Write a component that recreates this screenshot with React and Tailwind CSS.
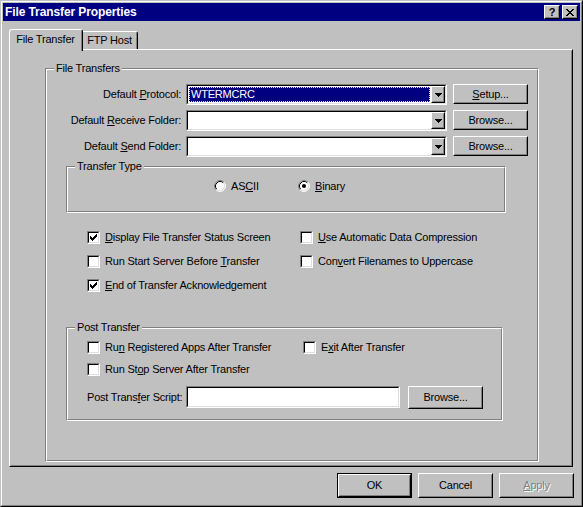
import React from "react";

function Raised({ className = "", innerClassName = "", children }) {
  return (
    <div className={"border border-t-white border-l-white border-r-black border-b-black bg-[#c0c0c0] " + className}>
      <div className={"h-full w-full border border-t-[#c0c0c0] border-l-[#c0c0c0] border-r-[#808080] border-b-[#808080] " + innerClassName}>
        {children}
      </div>
    </div>
  );
}

function Sunken({ className = "", innerClassName = "", children }) {
  return (
    <div className={"border border-t-[#808080] border-l-[#808080] border-r-white border-b-white " + className}>
      <div className={"h-full w-full border border-t-black border-l-black border-r-[#dfdfdf] border-b-[#dfdfdf] bg-white " + innerClassName}>
        {children}
      </div>
    </div>
  );
}

function Button({ children, def, disabled, className = "w-[75px] h-[25px]" }) {
  const content = (
    <Raised className="h-full w-full" innerClassName="flex items-center justify-center">
      <span className={disabled ? "text-[#808080] [text-shadow:1px_1px_0_#ffffff]" : ""}>{children}</span>
    </Raised>
  );
  if (def) {
    return <div className={"border border-black " + className}>{content}</div>;
  }
  return <div className={className}>{content}</div>;
}

function Arrow() {
  return (
    <svg width="7" height="4" viewBox="0 0 7 4" shapeRendering="crispEdges">
      <rect x="0" y="0" width="7" height="1" fill="#000" />
      <rect x="1" y="1" width="5" height="1" fill="#000" />
      <rect x="2" y="2" width="3" height="1" fill="#000" />
      <rect x="3" y="3" width="1" height="1" fill="#000" />
    </svg>
  );
}

function Combo({ value, className = "w-[261px] h-[21px]" }) {
  return (
    <Sunken className={className} innerClassName="flex">
      <div className="flex-1 p-px">
        {value ? (
          <div className="h-full bg-[#000080] text-white border border-dotted border-[#ffff00] flex items-center pl-[1px] leading-none">
            {value}
          </div>
        ) : null}
      </div>
      <Raised className="w-[14px] h-full" innerClassName="flex items-center justify-center">
        <Arrow />
      </Raised>
    </Sunken>
  );
}

function CheckBox({ checked }) {
  return (
    <div className="w-[13px] h-[13px] shrink-0 border border-t-[#808080] border-l-[#808080] border-r-white border-b-white">
      <div className="w-full h-full border border-t-black border-l-black border-r-[#dfdfdf] border-b-[#dfdfdf] bg-white flex items-center justify-center">
        {checked ? (
          <svg width="7" height="7" viewBox="0 0 7 7" shapeRendering="crispEdges">
            <rect x="0" y="2" width="1" height="3" fill="#000" />
            <rect x="1" y="3" width="1" height="3" fill="#000" />
            <rect x="2" y="4" width="1" height="3" fill="#000" />
            <rect x="3" y="3" width="1" height="3" fill="#000" />
            <rect x="4" y="2" width="1" height="3" fill="#000" />
            <rect x="5" y="1" width="1" height="3" fill="#000" />
            <rect x="6" y="0" width="1" height="3" fill="#000" />
          </svg>
        ) : null}
      </div>
    </div>
  );
}

function Check({ checked, children }) {
  return (
    <div className="flex items-center h-[13px]">
      <CheckBox checked={checked} />
      <span className="ml-[5px] whitespace-nowrap">{children}</span>
    </div>
  );
}

function Radio({ checked }) {
  return (
    <svg width="12" height="12" viewBox="0 0 12 12" className="shrink-0">
      <circle cx="6" cy="6" r="5" fill="#fff" />
      <path d="M2.11 9.89 A5.5 5.5 0 0 1 9.89 2.11" fill="none" stroke="#808080" strokeWidth="1" />
      <path d="M9.89 2.11 A5.5 5.5 0 0 1 2.11 9.89" fill="none" stroke="#ffffff" strokeWidth="1" />
      <path d="M2.82 9.18 A4.5 4.5 0 0 1 9.18 2.82" fill="none" stroke="#000000" strokeWidth="1" />
      <path d="M9.18 2.82 A4.5 4.5 0 0 1 2.82 9.18" fill="none" stroke="#dfdfdf" strokeWidth="1" />
      {checked ? <circle cx="6" cy="6" r="2" fill="#000" /> : null}
    </svg>
  );
}

function Group({ label, className, innerClassName = "", children }) {
  return (
    <div className={"relative border border-t-[#808080] border-l-[#808080] border-r-white border-b-white " + className}>
      <div className={"h-full w-full border border-t-white border-l-white border-r-[#808080] border-b-[#808080] " + innerClassName}>
        {children}
      </div>
      <div className="absolute left-[8px] top-[-8px] px-[2px] bg-[#c0c0c0] leading-[14px] whitespace-nowrap">
        {label}
      </div>
    </div>
  );
}

function U({ children }) {
  return <span className="underline underline-offset-[1px]">{children}</span>;
}

export default function App() {
  return (
    <div className="w-[583px] h-[507px] bg-[#c0c0c0] border border-t-[#c0c0c0] border-l-[#c0c0c0] border-r-black border-b-black font-['Liberation_Sans',Arial,sans-serif] text-[11px] tracking-[-0.2px] text-black overflow-hidden">
      <div className="h-full w-full border border-t-white border-l-white border-r-[#808080] border-b-[#808080] p-px flex flex-col">
        {/* Title bar */}
        <div className="h-[18px] bg-[#000080] flex items-center pl-[2px] pr-[2px] shrink-0">
          <span className="text-white font-bold text-[12px] tracking-[-0.1px]">File Transfer Properties</span>
          <div className="ml-auto flex gap-[2px]">
            <Raised className="w-[16px] h-[14px]" innerClassName="flex items-center justify-center">
              <span className="font-bold text-[11px] leading-none tracking-normal">?</span>
            </Raised>
            <Raised className="w-[16px] h-[14px]" innerClassName="flex items-center justify-center">
              <svg width="8" height="7" viewBox="0 0 8 7" shapeRendering="crispEdges">
                <rect x="0" y="0" width="2" height="1" fill="#000" />
                <rect x="6" y="0" width="2" height="1" fill="#000" />
                <rect x="1" y="1" width="2" height="1" fill="#000" />
                <rect x="5" y="1" width="2" height="1" fill="#000" />
                <rect x="2" y="2" width="4" height="1" fill="#000" />
                <rect x="3" y="3" width="2" height="1" fill="#000" />
                <rect x="2" y="4" width="4" height="1" fill="#000" />
                <rect x="1" y="5" width="2" height="1" fill="#000" />
                <rect x="5" y="5" width="2" height="1" fill="#000" />
                <rect x="0" y="6" width="2" height="1" fill="#000" />
                <rect x="6" y="6" width="2" height="1" fill="#000" />
              </svg>
            </Raised>
          </div>
        </div>

        {/* Tabs */}
        <div className="h-[28px] flex items-end pl-[6px] shrink-0">
          <div className="relative z-10 w-[74px] h-[22px] -mb-[2px] bg-[#c0c0c0] border-l border-t border-r border-l-white border-t-white border-r-black rounded-t-[3px]">
            <div className="h-full border-r border-r-[#808080] flex items-center justify-center pb-[3px]">
              File Transfer
            </div>
          </div>
          <div className="w-[55px] h-[18px] bg-[#c0c0c0] border-t border-r border-t-white border-r-black rounded-tr-[3px]">
            <div className="h-full border-r border-r-[#808080] flex items-center justify-center pb-[1px]">
              FTP Host
            </div>
          </div>
        </div>

        {/* Panel */}
        <div className="ml-[6px] w-[564px] h-[418px] shrink-0 border border-t-white border-l-white border-r-black border-b-black">
          <div className="h-full w-full border border-t-[#c0c0c0] border-l-[#c0c0c0] border-r-[#808080] border-b-[#808080] pl-[34px] pt-[17px]">
            <Group label="File Transfers" className="w-[494px] h-[394px]" innerClassName="flex flex-col pt-[14px]">
              {/* field rows */}
              <div className="flex flex-col gap-[5px]">
                <div className="flex items-start">
                  <div className="w-[139px] pr-[5px] text-right leading-[21px] whitespace-nowrap">
                    Default <U>P</U>rotocol:
                  </div>
                  <Combo value="WTERMCRC" />
                  <Button className="ml-[6px] w-[75px] h-[20px]">
                    <U>S</U>etup...
                  </Button>
                </div>
                <div className="flex items-start">
                  <div className="w-[139px] pr-[5px] text-right leading-[21px] whitespace-nowrap">
                    Default <U>R</U>eceive Folder:
                  </div>
                  <Combo />
                  <Button className="ml-[6px] w-[75px] h-[20px]">Browse...</Button>
                </div>
                <div className="flex items-start">
                  <div className="w-[139px] pr-[5px] text-right leading-[21px] whitespace-nowrap">
                    Default <U>S</U>end Folder:
                  </div>
                  <Combo />
                  <Button className="ml-[6px] w-[75px] h-[20px]">Browse...</Button>
                </div>
              </div>

              {/* Transfer type */}
              <Group label="Transfer Type" className="mt-[9px] ml-[19px] w-[440px] h-[47px] shrink-0" innerClassName="flex items-start pl-[146px] pt-[12px]">
                <div className="w-[84px] flex items-center h-[12px]">
                  <Radio />
                  <span className="ml-[5px]">
                    AS<U>C</U>II
                  </span>
                </div>
                <div className="flex items-center h-[12px]">
                  <Radio checked />
                  <span className="ml-[5px]">
                    <U>B</U>inary
                  </span>
                </div>
              </Group>

              {/* Checks */}
              <div className="mt-[18px] ml-[40px] grid grid-cols-[213px_auto] gap-y-[11px]">
                <Check checked>
                  <U>D</U>isplay File Transfer Status Screen
                </Check>
                <Check>
                  <U>U</U>se Automatic Data Compression
                </Check>
                <Check>
                  Run Start Server Before <U>T</U>ransfer
                </Check>
                <Check>
                  Con<U>v</U>ert Filenames to Uppercase
                </Check>
                <Check checked>
                  <U>E</U>nd of Transfer Acknowledgement
                </Check>
              </div>

              {/* Post transfer */}
              <Group label="Post Transfer" className="mt-[35px] ml-[19px] w-[437px] h-[94px] shrink-0" innerClassName="flex flex-col pl-[19px] pt-[12px]">
                <div className="grid grid-cols-[216px_auto]">
                  <Check>
                    Ru<U>n</U> Registered Apps After Transfer
                  </Check>
                  <Check>
                    E<U>x</U>it After Transfer
                  </Check>
                </div>
                <div className="mt-[9px]">
                  <Check>
                    Run St<U>o</U>p Server After Transfer
                  </Check>
                </div>
                <div className="mt-[10px] flex items-start">
                  <div className="w-[99px] leading-[22px] whitespace-nowrap">
                    Post Trans<U>f</U>er Script:
                  </div>
                  <Sunken className="w-[214px] h-[22px]" />
                  <Button className="ml-[8px] w-[75px] h-[23px]">Browse...</Button>
                </div>
              </Group>
            </Group>
          </div>
        </div>

        {/* Bottom buttons */}
        <div className="mt-[6px] flex justify-end gap-[6px] pr-[6px] shrink-0">
          <Button def className="w-[75px] h-[25px]">OK</Button>
          <Button className="w-[75px] h-[25px]">Cancel</Button>
          <Button disabled className="w-[75px] h-[25px]">
            <U>A</U>pply
          </Button>
        </div>
      </div>
    </div>
  );
}
